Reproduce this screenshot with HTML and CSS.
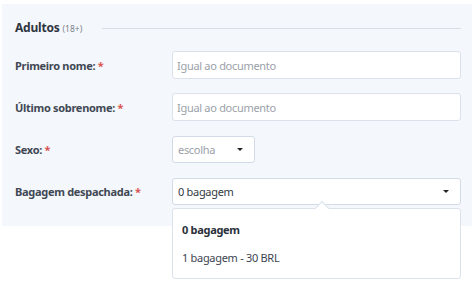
FILE: index.html
```html
<!DOCTYPE html>
<html lang="pt">
<head>
    <meta charset="UTF-8">
    <meta name="viewport" content="width=device-width, initial-scale=1.0">
    <title>Passageiros</title>
    <link rel="stylesheet" href="styles.css">
</head>
<body>

<div class="panel">
    <div class="heading">
        <h3 class="title">Adultos <span class="age">(18+)</span></h3>
        <span class="rule"></span>
    </div>

    <div class="form">
        <label class="label" for="firstName">Primeiro nome: <span class="req">*</span></label>
        <input id="firstName" class="input" type="text" placeholder="Igual ao documento">

        <label class="label" for="lastName">Último sobrenome: <span class="req">*</span></label>
        <input id="lastName" class="input" type="text" placeholder="Igual ao documento">

        <label class="label">Sexo: <span class="req">*</span></label>
        <div class="select select-small">
            <span class="placeholder">escolha</span>
            <span class="arrow"></span>
        </div>

        <label class="label">Bagagem despachada: <span class="req">*</span></label>
        <div class="select-wrap">
            <div class="select">
                <span>0 bagagem</span>
                <span class="arrow"></span>
            </div>
            <ul class="menu">
                <li class="option selected">0 bagagem</li>
                <li class="option">1 bagagem - 30 BRL</li>
            </ul>
        </div>
    </div>
</div>

</body>
</html>
```

FILE: styles.css
```css
html, body {
    min-height: 100%;
    height: 100%;
}
body {
    margin: 0;
    font-family: "Noto Sans", "Open Sans", sans-serif;
    color: #333a44;
    background-color: #fff;
}
.panel {
    margin: 4px 2px 0;
    padding: 16px 11px 21px 13px;
    background-color: #f4f7fb;
}
.heading {
    display: flex;
    align-items: center;
    height: 16px;
    margin-bottom: 15px;
}
.title {
    margin: 0;
    font-size: 12px;
    font-weight: bold;
    line-height: 16px;
    letter-spacing: -0.2px;
    color: #2f3540;
}
.age {
    font-size: 8.5px;
    font-weight: normal;
    letter-spacing: 0;
    color: #7a818b;
}
.rule {
    flex: 1;
    height: 1px;
    margin: 1px 0 0 20px;
    background-color: #d8dee8;
}
.form {
    display: grid;
    grid-template-columns: 157px 1fr;
    grid-auto-rows: 28px;
    row-gap: 14px;
    align-items: center;
}
.label {
    font-size: 11px;
    font-weight: bold;
    letter-spacing: -0.3px;
    color: #414854;
}
.req {
    color: #d9534f;
}
.input {
    box-sizing: border-box;
    width: 100%;
    height: 28px;
    padding: 0 4px;
    border: 1px solid #dbe2ec;
    border-radius: 3px;
    background-color: #fff;
    font-family: inherit;
    font-size: 11px;
    letter-spacing: -0.3px;
    color: #333;
}
.input::placeholder {
    color: #9ba1a9;
}
.select {
    box-sizing: border-box;
    display: flex;
    align-items: center;
    justify-content: space-between;
    height: 27px;
    padding: 0 11px 0 5px;
    border: 1px solid #d3dbe6;
    border-radius: 3px;
    background-color: #fff;
    font-size: 11px;
    letter-spacing: -0.3px;
    color: #333a44;
}
.select-small {
    width: 83px;
}
.placeholder {
    color: #9ba1a9;
}
.arrow {
    width: 0;
    height: 0;
    border-left: 3px solid transparent;
    border-right: 3px solid transparent;
    border-top: 3px solid #222;
}
.select-wrap {
    position: relative;
}
.menu {
    position: absolute;
    top: 30px;
    left: 0;
    right: 0;
    box-sizing: border-box;
    height: 71px;
    margin: 0;
    padding: 12px 9px;
    list-style: none;
    border: 1px solid #dbe2ec;
    border-radius: 3px;
    background-color: #fff;
}
.menu::before {
    content: "";
    position: absolute;
    top: -6px;
    left: 144px;
    width: 9px;
    height: 9px;
    background-color: #fff;
    border-left: 1px solid #dbe2ec;
    border-top: 1px solid #dbe2ec;
    transform: rotate(45deg);
}
.option {
    height: 28px;
    line-height: 18px;
    font-size: 11px;
    letter-spacing: -0.3px;
    color: #3d4450;
}
.selected {
    font-weight: bold;
    color: #2a3039;
}
```
